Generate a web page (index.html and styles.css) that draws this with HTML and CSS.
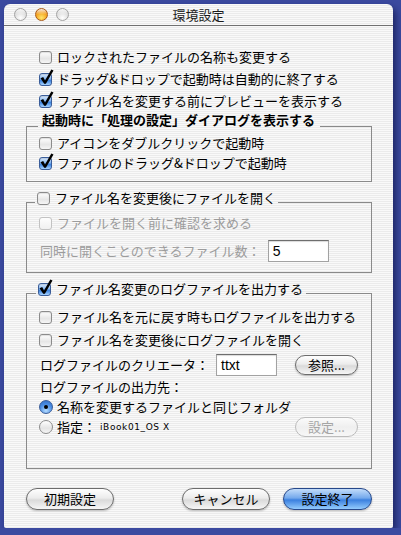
FILE: index.html
```html
<!DOCTYPE html>
<html lang="ja">
<head>
  <meta charset="UTF-8" />
  <title>環境設定</title>
  <link rel="stylesheet" href="styles.css">
</head>
<body>

  <div class="window">
    <div class="titlebar">
      <div class="lights">
        <span class="light"></span>
        <span class="light min"></span>
        <span class="light"></span>
      </div>
      <div class="title">環境設定</div>
      <div></div>
    </div>

    <div class="content">
      <label class="row top"><span class="cb"></span>ロックされたファイルの名称も変更する</label>
      <label class="row top"><span class="cb on"><svg viewBox="0 0 15 16"><path d="M1.5 9.2 L4.2 8 L6 11.4 L12.3 0.5 L14.5 1.5 L6.9 14.8 L5.2 14.8 Z"/></svg></span>ドラッグ&amp;ドロップで起動時は自動的に終了する</label>
      <label class="row top"><span class="cb on"><svg viewBox="0 0 15 16"><path d="M1.5 9.2 L4.2 8 L6 11.4 L12.3 0.5 L14.5 1.5 L6.9 14.8 L5.2 14.8 Z"/></svg></span>ファイル名を変更する前にプレビューを表示する</label>

      <div class="group g1">
        <div class="group-title heading">起動時に「処理の設定」ダイアログを表示する</div>
        <label class="row r4"><span class="cb"></span>アイコンをダブルクリックで起動時</label>
        <label class="row"><span class="cb on"><svg viewBox="0 0 15 16"><path d="M1.5 9.2 L4.2 8 L6 11.4 L12.3 0.5 L14.5 1.5 L6.9 14.8 L5.2 14.8 Z"/></svg></span>ファイルのドラッグ&amp;ドロップで起動時</label>
      </div>

      <div class="group g2">
        <label class="group-title"><span class="cb"></span>ファイル名を変更後にファイルを開く</label>
        <label class="row dis ra"><span class="cb"></span>ファイルを開く前に確認を求める</label>
        <div class="row field-row dis rb-row">同時に開くことのできるファイル数：<span class="field">5</span></div>
      </div>

      <div class="group g3">
        <label class="group-title"><span class="cb on"><svg viewBox="0 0 15 16"><path d="M1.5 9.2 L4.2 8 L6 11.4 L12.3 0.5 L14.5 1.5 L6.9 14.8 L5.2 14.8 Z"/></svg></span>ファイル名変更のログファイルを出力する</label>
        <label class="row rc"><span class="cb"></span>ファイル名を元に戻す時もログファイルを出力する</label>
        <label class="row rd"><span class="cb"></span>ファイル名を変更後にログファイルを開く</label>
        <div class="row field-row re">ログファイルのクリエータ：<span class="field">ttxt</span><span class="btn small">参照...</span></div>
        <div class="row rf">ログファイルの出力先：</div>
        <label class="row"><span class="rb on"></span>名称を変更するファイルと同じフォルダ</label>
        <div class="row"><span class="rb"></span>指定：<span class="path">iBook01_OS X</span><span class="btn small disabled">設定...</span></div>
      </div>

      <div class="buttons">
        <span class="btn">初期設定</span>
        <span class="btn cancel">キャンセル</span>
        <span class="btn default">設定終了</span>
      </div>
    </div>
  </div>

</body>
</html>
```

FILE: styles.css
```css
body {
  margin: 0;
  background-color: #3b4aa0;
  font-family: "Noto Sans CJK JP", "Noto Sans", sans-serif;
  font-size: 13px;
  color: #000;
}
.window {
  width: 389px;
  height: 524px;
  margin: 4px 0 0 4px;
  border-radius: 6px 6px 2px 2px;
  background: repeating-linear-gradient(to bottom, #f9f9f9 0 1px, #ebebeb 1px 2px) fixed;
  box-shadow: 3px 4px 7px rgba(10, 15, 60, 0.6);
  display: flex;
  flex-direction: column;
}
.titlebar {
  height: 21px;
  border-bottom: 1px solid #717171;
  display: grid;
  grid-template-columns: 1fr auto 1fr;
  align-items: center;
}
.lights {
  display: flex;
  gap: 8px;
  padding-left: 10px;
}
.light {
  width: 13px;
  height: 13px;
  box-sizing: border-box;
  border-radius: 50%;
  border: 1px solid #a3a3a3;
  background:
    linear-gradient(rgba(255,255,255,0.9), rgba(255,255,255,0) 50%),
    radial-gradient(circle at 50% 80%, #ffffff 0, #e2e2e2 50%, #bdbdbd 100%);
}
.light.min {
  border-color: #a95b17;
  background:
    linear-gradient(rgba(255,255,255,0.85), rgba(255,255,255,0) 50%),
    radial-gradient(circle at 50% 80%, #ffe66b 0, #f4a21f 55%, #c96414 100%);
}
.title {
  font-size: 13px;
  line-height: 16px;
  color: #1a1a1a;
}
.content {
  padding: 20px 21px 0 22px;
  display: flex;
  flex-direction: column;
}
.row {
  display: flex;
  align-items: center;
  height: 22px;
  line-height: 16px;
  white-space: nowrap;
}
.row.top {
  padding-left: 13px;
}
.cb {
  position: relative;
  flex: none;
  width: 13px;
  height: 13px;
  box-sizing: border-box;
  border: 1px solid #8b8b8b;
  border-radius: 3px;
  background: linear-gradient(#ffffff, #e6e6e6 60%, #f6f6f6);
  box-shadow: inset 0 1px 1px rgba(0,0,0,0.12);
  margin-right: 5px;
}
.cb.on {
  border-color: #3a5d99;
  background: linear-gradient(#dcecff 0%, #8fbdf2 40%, #3f85e0 60%, #a6d3ff 100%);
}
.cb svg {
  position: absolute;
  left: -1px;
  top: -5px;
  width: 15px;
  height: 16px;
}
.cb svg path {
  fill: #000;
}
.rb {
  position: relative;
  flex: none;
  width: 14px;
  height: 14px;
  box-sizing: border-box;
  border: 1px solid #8b8b8b;
  border-radius: 50%;
  background: linear-gradient(#ffffff, #e4e4e4 60%, #f6f6f6);
  margin-right: 4px;
}
.rb.on {
  border-color: #3a5d99;
  background: radial-gradient(circle at 50% 80%, #b5dcff 0, #4a8de3 55%, #2f6cc4 100%);
}
.rb.on::after {
  content: "";
  position: absolute;
  left: 4px;
  top: 4px;
  width: 4px;
  height: 4px;
  border-radius: 50%;
  background: #000;
}
.group {
  display: flex;
  flex-direction: column;
  border: 1px solid #8a8a8a;
  padding: 0 12px;
}
.group-title {
  align-self: flex-start;
  display: flex;
  align-items: center;
  height: 16px;
  line-height: 16px;
  white-space: nowrap;
  background: repeating-linear-gradient(to bottom, #f9f9f9 0 1px, #ebebeb 1px 2px) fixed;
}
.heading {
  font-weight: bold;
}
.g1 {
  margin-top: 14px;
  padding-bottom: 8px;
}
.g1 .group-title {
  margin: -15px 0 0 -1px;
  padding: 0 5px 0 4px;
}
.g1 .row {
  height: 20px;
}
.g1 .r4 {
  margin-top: 5px;
}
.g2 {
  margin-top: 20px;
  padding-bottom: 10px;
}
.g2 .group-title {
  margin: -13px 0 0 -4px;
  padding: 0 2px 0 2px;
}
.g2 .ra {
  height: 20px;
  margin-top: 7px;
}
.g2 .rb-row {
  margin-top: 7px;
  padding-left: 1px;
}
.dis {
  color: #9c9c9c;
}
.dis .cb {
  border-color: #c2c2c2;
  background: linear-gradient(#fdfdfd, #f0f0f0);
  box-shadow: none;
}
.g3 {
  margin-top: 20px;
  padding-bottom: 31px;
}
.g3 .group-title {
  margin: -13px 0 0 -3px;
  padding: 0 3px 0 2px;
}
.g3 .row {
  height: 20px;
}
.g3 .rc {
  margin-top: 10px;
}
.g3 .rd {
  margin-top: 3px;
}
.g3 .re {
  height: 22px;
  margin-top: 4px;
  padding-left: 1px;
}
.g3 .rf {
  margin-top: 1px;
  padding-left: 1px;
}
.field {
  width: 61px;
  height: 22px;
  box-sizing: border-box;
  margin-left: 7px;
  padding-left: 4px;
  background: #fff;
  border: 1px solid #a2a2a2;
  border-top-color: #6e6e6e;
  box-shadow: inset 0 1px 1px rgba(0,0,0,0.15);
  font-family: "Liberation Sans", Arial, sans-serif;
  font-size: 14px;
  line-height: 20px;
  color: #000;
}
.path {
  font-family: "DejaVu Sans", sans-serif;
  font-size: 9px;
  letter-spacing: 0.6px;
  margin-left: 4px;
}
.btn {
  flex: none;
  display: flex;
  align-items: center;
  justify-content: center;
  height: 22px;
  box-sizing: border-box;
  border: 1px solid #6c6c6c;
  border-radius: 11px;
  background: linear-gradient(#fefefe 0%, #ececec 45%, #dadada 55%, #f6f6f6 100%);
  box-shadow: 0 1px 2px rgba(0,0,0,0.25);
  line-height: 16px;
  color: #000;
}
.btn.small {
  width: 63px;
  height: 20px;
  margin-left: 18px;
}
.btn.small.disabled {
  margin-left: auto;
  margin-right: 1px;
  border-color: #bcbcbc;
  background: linear-gradient(#fbfbfb, #efefef 50%, #f7f7f7);
  box-shadow: none;
  color: #a5a5a5;
}
.buttons {
  display: flex;
  margin-top: 19px;
}
.buttons .btn {
  width: 88px;
}
.buttons .cancel {
  margin-left: auto;
}
.buttons .default {
  width: 89px;
  margin-left: 13px;
  border-color: #27488a;
  background: linear-gradient(#c2dcfa 0%, #74a9ec 45%, #3b80df 55%, #93cbfd 100%);
}
```
